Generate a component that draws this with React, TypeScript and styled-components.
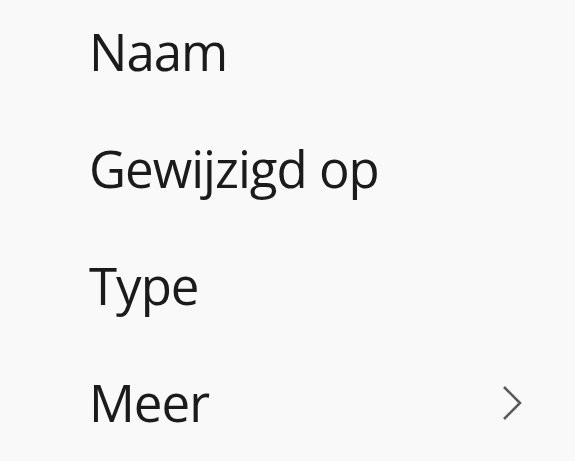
import React from 'react';
import styled, { createGlobalStyle } from 'styled-components';

const GlobalStyle = createGlobalStyle`
  html, body {
    margin: 0;
    padding: 0;
    background: #f9f9f9;
  }
`;

const Menu = styled.div`
  width: 575px;
  height: 461px;
  background: #f9f9f9;
  display: flex;
  flex-direction: column;
  overflow: hidden;
`;

const Item = styled.div`
  height: 117px;
  display: flex;
  align-items: center;
  justify-content: space-between;
  padding: 0 52px 14px 89px;
  box-sizing: border-box;
  flex-shrink: 0;
`;

const Label = styled.span`
  font-family: 'Open Sans', 'Noto Sans', sans-serif;
  font-size: 51px;
  letter-spacing: -1px;
  color: #1b1b1b;
  line-height: 1;
`;

const Chevron = () => (
  <svg width="22" height="36" viewBox="0 0 22 36">
    <path d="M3 2 L19 18 L3 34" fill="none" stroke="#5a5a5a" strokeWidth="2.6" />
  </svg>
);

const items = ['Naam', 'Gewijzigd op', 'Type', 'Meer'];

export default function App() {
  return (
    <>
      <GlobalStyle />
      <Menu>
        {items.map((label, i) => (
          <Item key={label}>
            <Label>{label}</Label>
            {i === items.length - 1 && <Chevron />}
          </Item>
        ))}
      </Menu>
    </>
  );
}
